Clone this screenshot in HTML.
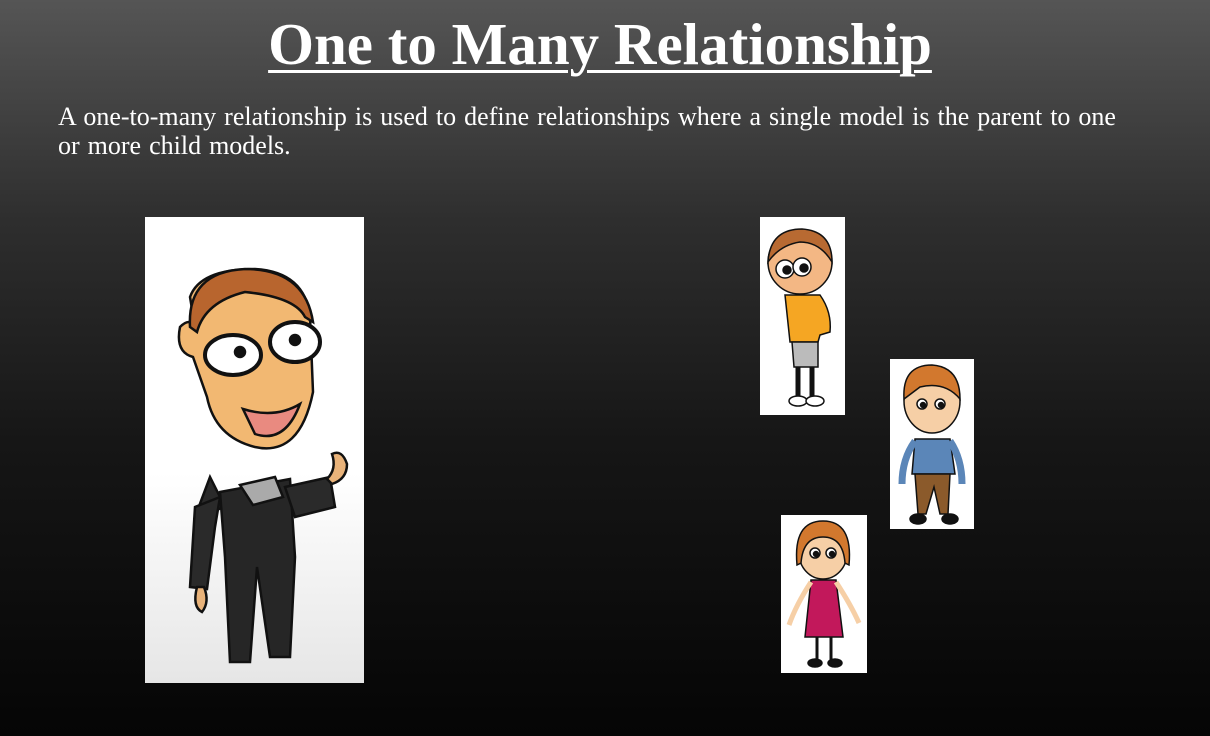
<!DOCTYPE html>
<html><head><style>
html,body{margin:0;padding:0}
body{width:1210px;height:736px;overflow:hidden;background:linear-gradient(#555 0%,#2e2e2e 30%,#161616 60%,#050505 100%);font-family:"Liberation Serif",serif;color:#fff;position:relative}
h1{position:absolute;top:10px;left:0;width:1200px;text-align:center;margin:0;font-size:59px;font-weight:bold;text-decoration:underline;text-decoration-thickness:3px;text-underline-offset:6px}
p{position:absolute;left:58px;top:102px;margin:0;width:1120px;font-size:26px;line-height:29px;word-spacing:1.5px;white-space:nowrap}
.card{position:absolute;background:#fff}
svg{display:block}
</style></head><body>
<h1>One to Many Relationship</h1>
<p>A one-to-many relationship is used to define relationships where a single model is the parent to one<br>or more child models.</p>

<div class="card" style="left:145px;top:217px;width:219px;height:466px;background:linear-gradient(#fff 55%,#e6e6e6)">
<svg width="219" height="466" viewBox="0 0 219 466" stroke="#111" stroke-width="2.5">
<path d="M50 300 L65 260 L80 290 Z" fill="#2a2a2a"/>
<path d="M75 280 L50 290 L45 370 L62 372 L70 310 Z" fill="#2a2a2a"/>
<path d="M52 370 q-5 20 5 25 q8 -10 2 -25z" fill="#e9b37a"/>
<path d="M75 275 L145 262 L150 340 L145 440 L125 440 L112 350 L105 445 L85 445 L80 340 Z" fill="#262626"/>
<path d="M140 270 L185 260 L190 290 L150 300 Z" fill="#2a2a2a"/>
<path d="M182 262 q10 -10 5 -25 q10 -5 15 10 q0 15 -15 20z" fill="#e9b37a"/>
<path d="M95 268 l35 -8 l8 20 l-30 8z" fill="#aaa"/>
<path d="M45 80 Q55 52 110 52 Q160 55 165 100 L168 175 Q155 240 110 230 Q70 220 62 180 L48 140 Q30 135 35 110 Q45 100 50 110 Z" fill="#f2b872"/>
<path d="M45 110 Q42 55 100 52 Q160 52 168 105 L160 100 Q150 80 100 75 Q60 85 52 115Z" fill="#b8652e"/>
<ellipse cx="88" cy="138" rx="28" ry="20" fill="#fff" stroke-width="4"/>
<ellipse cx="150" cy="125" rx="25" ry="20" fill="#fff" stroke-width="4"/>
<circle cx="95" cy="135" r="5" fill="#111"/><circle cx="150" cy="123" r="5" fill="#111"/>
<path d="M98 192 Q130 202 155 187 Q140 227 110 217 Z" fill="#e98a80"/>
</svg></div>

<div class="card" style="left:760px;top:217px;width:85px;height:198px">
<svg width="85" height="198" viewBox="0 0 85 198" stroke="#111" stroke-width="1.5">
<circle cx="40" cy="45" r="32" fill="#f3b784"/>
<path d="M8 45 Q10 12 42 12 Q72 14 72 45 Q60 25 40 25 Q20 28 8 45z" fill="#b86a32"/>
<circle cx="25" cy="52" r="9" fill="#fff"/><circle cx="42" cy="50" r="9" fill="#fff"/>
<circle cx="27" cy="53" r="4" fill="#111"/><circle cx="44" cy="51" r="4" fill="#111"/>
<path d="M25 78 L60 78 Q72 95 70 115 L60 118 L58 125 L30 125 Z" fill="#f5a623"/>
<path d="M32 125 L58 125 L58 150 L34 150Z" fill="#bbb"/>
<path d="M38 150 L38 180 M52 150 L52 180" stroke-width="5"/>
<ellipse cx="38" cy="184" rx="9" ry="5" fill="#fff"/><ellipse cx="55" cy="184" rx="9" ry="5" fill="#fff"/>
</svg></div>

<div class="card" style="left:890px;top:359px;width:84px;height:170px">
<svg width="84" height="170" viewBox="0 0 84 170" stroke="#111" stroke-width="1.5">
<path d="M25 80 L60 80 L65 115 L22 115Z" fill="#5b86b8"/>
<path d="M25 82 Q12 100 12 125 M60 82 Q72 100 72 125" stroke="#5b86b8" stroke-width="7" fill="none"/>
<path d="M25 115 L60 115 L58 155 L50 155 L44 128 L36 155 L28 155Z" fill="#8b5a2b"/>
<ellipse cx="28" cy="160" rx="8" ry="5" fill="#111"/><ellipse cx="60" cy="160" rx="8" ry="5" fill="#111"/>
<ellipse cx="42" cy="42" rx="28" ry="32" fill="#f6cfa6"/>
<path d="M14 40 Q12 6 42 6 Q70 8 70 40 Q55 22 30 28Z" fill="#d2782e"/>
<circle cx="32" cy="45" r="5" fill="#fff"/><circle cx="50" cy="45" r="5" fill="#fff"/>
<circle cx="33" cy="46" r="2.5" fill="#111"/><circle cx="51" cy="46" r="2.5" fill="#111"/>
</svg></div>

<div class="card" style="left:781px;top:515px;width:86px;height:158px">
<svg width="86" height="158" viewBox="0 0 86 158" stroke="#111" stroke-width="1.5">
<path d="M30 65 L55 65 L62 122 L24 122Z" fill="#c2185b"/>
<path d="M30 67 Q15 90 8 110 M55 67 Q70 90 78 108" stroke="#f6cfa6" stroke-width="5" fill="none"/>
<path d="M36 122 L36 145 M50 122 L50 145" stroke-width="3"/>
<ellipse cx="34" cy="148" rx="7" ry="4" fill="#111"/><ellipse cx="54" cy="148" rx="7" ry="4" fill="#111"/>
<ellipse cx="42" cy="38" rx="24" ry="26" fill="#f6cfa6"/>
<path d="M16 50 Q12 6 42 6 Q72 6 68 50 L64 48 Q62 22 42 22 Q22 22 20 48Z" fill="#d2782e"/>
<circle cx="34" cy="38" r="5" fill="#fff"/><circle cx="50" cy="38" r="5" fill="#fff"/>
<circle cx="35" cy="39" r="2.5" fill="#111"/><circle cx="51" cy="39" r="2.5" fill="#111"/>
</svg></div>
</body></html>
